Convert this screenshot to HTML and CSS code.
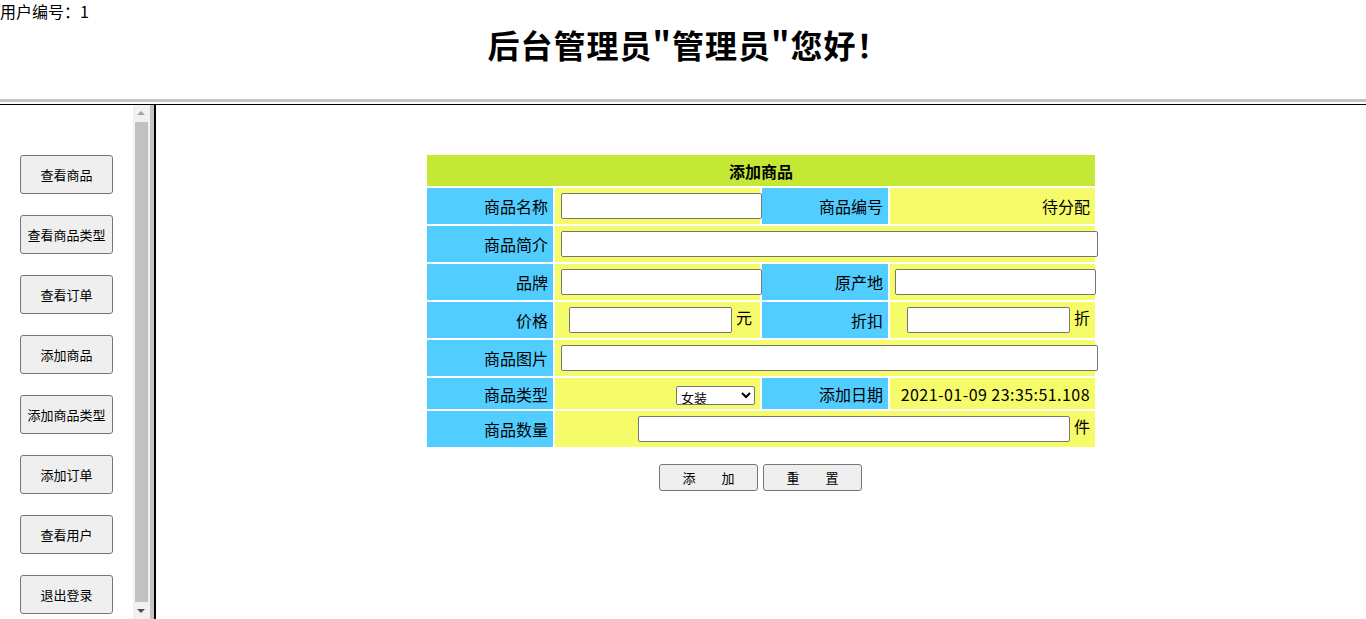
FILE: index.html
```html
<!DOCTYPE html>
<html lang="zh">
<head>
<meta charset="utf-8">
<title>后台管理</title>
<link rel="stylesheet" href="styles.css">
</head>
<body>
<div class="top">
  <div class="uid">用户编号：1</div>
  <h1 class="title">后台管理员"管理员"您好！</h1>
</div>
<div class="hsep"></div>
<div class="frames">
  <div class="left">
    <div class="menu">
      <button class="mbtn">查看商品</button>
      <button class="mbtn">查看商品类型</button>
      <button class="mbtn">查看订单</button>
      <button class="mbtn">添加商品</button>
      <button class="mbtn">添加商品类型</button>
      <button class="mbtn">添加订单</button>
      <button class="mbtn">查看用户</button>
      <button class="mbtn">退出登录</button>
    </div>
    <div class="scrollbar">
      <div class="arrow up"></div>
      <div class="thumb"></div>
      <div class="arrow down"></div>
    </div>
  </div>
  <div class="vsep"></div>
  <div class="main">
    <table class="form">
      <colgroup><col class="c1"><col class="c2"><col class="c3"><col class="c4"></colgroup>
      <tr class="head"><th colspan="4">添加商品</th></tr>
      <tr>
        <td class="lab">商品名称</td>
        <td class="val"><input class="in in-s" type="text"></td>
        <td class="lab">商品编号</td>
        <td class="val r">待分配</td>
      </tr>
      <tr>
        <td class="lab">商品简介</td>
        <td class="val" colspan="3"><input class="in in-l" type="text"></td>
      </tr>
      <tr>
        <td class="lab">品牌</td>
        <td class="val"><input class="in in-s" type="text"></td>
        <td class="lab">原产地</td>
        <td class="val pl5"><input class="in in-s" type="text"></td>
      </tr>
      <tr>
        <td class="lab">价格</td>
        <td class="val r pr8"><input class="in in-p" type="text"> 元</td>
        <td class="lab">折扣</td>
        <td class="val r"><input class="in in-p" type="text"> 折</td>
      </tr>
      <tr>
        <td class="lab">商品图片</td>
        <td class="val" colspan="3"><input class="in in-l" type="text"></td>
      </tr>
      <tr class="short">
        <td class="lab">商品类型</td>
        <td class="val r"><select class="sel"><option>女装</option></select></td>
        <td class="lab">添加日期</td>
        <td class="val r date">2021-01-09 23:35:51.108</td>
      </tr>
      <tr>
        <td class="lab">商品数量</td>
        <td class="val r" colspan="3"><input class="in in-n" type="text"> 件</td>
      </tr>
    </table>
    <div class="actions">
      <button class="abtn">添　　加</button>
      <button class="abtn">重　　置</button>
    </div>
  </div>
</div>
</body>
</html>
```
FILE: styles.css
```css
html, body {
  margin: 0;
  padding: 0;
  background: #fff;
  font-family: "Noto Sans CJK SC", "Liberation Sans", sans-serif;
  color: #000;
  overflow: hidden;
}
.top {
  height: 99px;
}
.uid {
  font-size: 16px;
  line-height: 22px;
}
.title {
  margin: 0;
  font-size: 32px;
  font-weight: bold;
  line-height: 44px;
  text-align: center;
  letter-spacing: 1px;
  padding-left: 11px;
}
.hsep {
  height: 3px;
  background: #c4c4c4;
  border-bottom: 2px solid #fff;
}
.frames {
  display: flex;
  border-top: 1px solid #000;
  height: 514px;
}
.left {
  width: 150px;
  display: flex;
  flex: none;
}
.menu {
  width: 133px;
  padding: 50px 0 0 20px;
  box-sizing: border-box;
  display: flex;
  flex-direction: column;
  gap: 21px;
}
.mbtn {
  width: 93px;
  height: 39px;
  flex: none;
  font-family: "Noto Sans CJK SC", "Liberation Sans", sans-serif;
  font-size: 13px;
  background: #efefef;
  border: 1px solid #767676;
  border-radius: 3px;
  padding: 0;
  color: #000;
}
.scrollbar {
  width: 17px;
  background: #f1f1f1;
  display: flex;
  flex-direction: column;
}
.arrow {
  height: 17px;
  flex: none;
  position: relative;
}
.arrow::after {
  content: "";
  position: absolute;
  left: 4px;
  border-left: 4px solid transparent;
  border-right: 4px solid transparent;
}
.arrow.up::after {
  top: 6px;
  border-bottom: 4px solid #a3a3a3;
}
.arrow.down::after {
  top: 7px;
  border-top: 4px solid #505050;
}
.thumb {
  flex: 1;
  margin: 0 2px;
  background: #c1c1c1;
}
.vsep {
  width: 4px;
  background: #c4c4c4;
  border-right: 2px solid #000;
  flex: none;
}
.main {
  flex: 1;
  padding-top: 48px;
}
.form {
  margin: 0 auto;
  width: 672px;
  border-spacing: 2px;
  table-layout: fixed;
  font-size: 16px;
}
.c1, .c3 { width: 126px; }
.c2, .c4 { width: 205px; }
.form th {
  background: #c4e833;
  height: 31px;
  padding: 0;
  font-size: 16px;
  font-weight: bold;
}
.form td {
  height: 36px;
  padding: 0 5px 0 6px;
  white-space: nowrap;
  overflow: visible;
  line-height: 20px;
}
.form tr.short td {
  height: 31px;
}
.lab {
  background: #52cdff;
  text-align: right;
}
.val {
  background: #f6fb69;
  text-align: left;
}
.val.r {
  text-align: right;
}
.val.pr8 {
  padding-right: 8px;
}
.val.pl5 {
  padding-left: 5px;
}
.date {
  letter-spacing: 0.45px;
}
.in {
  height: 26px;
  box-sizing: border-box;
  border: 1px solid #767676;
  border-radius: 2px;
  background: #fff;
  padding: 1px 2px;
  vertical-align: middle;
  font-size: 13px;
  margin: 0;
}
.in-s { width: 201px; }
.in-l { width: 537px; }
.in-p { width: 163px; }
.in-n { width: 432px; }
.sel {
  width: 79px;
  height: 19px;
  font-size: 13px;
  font-family: "Noto Sans CJK SC", "Liberation Sans", sans-serif;
  border: 1px solid #767676;
  border-radius: 2px;
  background: #fff;
  padding: 0;
  vertical-align: middle;
}
.actions {
  display: flex;
  justify-content: center;
  gap: 5px;
  margin-top: 15px;
  padding-right: 1px;
}
.abtn {
  width: 99px;
  height: 27px;
  font-family: "Noto Sans CJK SC", "Liberation Sans", sans-serif;
  font-size: 13px;
  background: #efefef;
  border: 1px solid #767676;
  border-radius: 3px;
  padding: 0;
  color: #000;
}
```
